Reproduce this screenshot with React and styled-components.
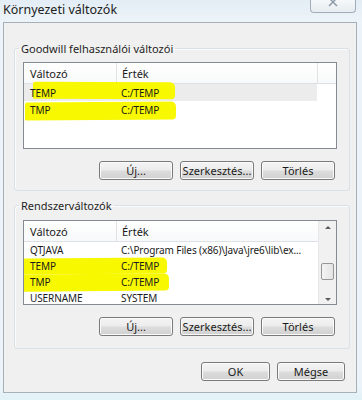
import styled, { createGlobalStyle } from "styled-components";

const GlobalStyle = createGlobalStyle`
  body {
    margin: 0;
    background: #e4f1f7;
    font-family: "Noto Sans", "Open Sans", sans-serif;
    color: #1a1a1a;
  }
`;

const Window = styled.div`
  width: 362px;
  height: 400px;
  display: flex;
  flex-direction: column;
  background: linear-gradient(180deg, #e3edf5 0px, #edf4f9 22px, #edf4f9 380px, #e2f2f7 400px);
  overflow: hidden;
`;

const TitleBar = styled.div`
  height: 22px;
  display: flex;
  justify-content: space-between;
  align-items: flex-start;
`;

const Title = styled.span`
  font-size: 12.5px;
  line-height: 16px;
  padding: 2px 0 0 3px;
  color: #222;
`;

const CloseButton = styled.div`
  width: 44px;
  height: 12px;
  margin-right: 6px;
  border: 1px solid #a3adb7;
  border-top: none;
  border-radius: 0 0 4px 4px;
  background: linear-gradient(180deg, #f5f8fa, #e6ecf1);
  display: flex;
  justify-content: center;
  align-items: flex-start;
`;

const Panel = styled.div`
  margin: 0 5px 0 3px;
  height: 371px;
  box-sizing: border-box;
  border: 1px solid #a7b0b8;
  background: #f0f0f0;
  padding: 19px 6px 0 10px;
  display: flex;
  flex-direction: column;
`;

const Group = styled.fieldset`
  margin: ${(p) => p.$mt || 0}px 0 0 0;
  border: 1px solid #d9e1e6;
  border-radius: 3px;
  padding: 0 12px ${(p) => p.$pb}px 8px;
  min-width: 0;
  box-shadow: inset 1px 1px 0 #fbfbfb;
`;

const Legend = styled.legend`
  font-size: 11px;
  line-height: 13px;
  padding: 0 2px;
  margin-left: -4px;
  color: #1e1e1e;
`;

const ListBox = styled.div`
  margin-top: ${(p) => p.$mt}px;
  height: ${(p) => p.$h}px;
  box-sizing: border-box;
  border: 1px solid #868b93;
  background: #fff;
  overflow: hidden;
  display: flex;
`;

const Table = styled.div`
  flex: 1;
  min-width: 0;
`;

const Header = styled.div`
  display: grid;
  grid-template-columns: 93px 201px 1fr;
  height: 21px;
  box-sizing: border-box;
  border-bottom: 1px solid #dde1e6;
  background: linear-gradient(180deg, #ffffff, #f8f9fa);
  font-size: 11px;
`;

const HeadCell = styled.div`
  display: flex;
  align-items: center;
  padding-left: ${(p) => p.$pl}px;
  border-right: ${(p) => (p.$last ? "none" : "1px solid #e2e2e2")};
`;

const Row = styled.div`
  position: relative;
  display: grid;
  grid-template-columns: 93px 1fr;
  height: ${(p) => p.$h}px;
  align-items: center;
  font-size: 10px;
  letter-spacing: -0.1px;
  background: ${(p) => (p.$selected ? "#ececec" : "transparent")};
  margin-right: ${(p) => (p.$selected ? 19 : 0)}px;
`;

const Cell = styled.span`
  position: relative;
  padding-left: ${(p) => p.$pl}px;
  white-space: nowrap;
  overflow: hidden;
`;

const Marker = styled.span`
  position: absolute;
  left: ${(p) => p.$l}px;
  top: ${(p) => p.$t}px;
  width: ${(p) => p.$w}px;
  height: ${(p) => p.$hh}px;
  background: #f8f800;
  border-radius: 2px 5px 4px 1px;
  transform: rotate(${(p) => p.$r || 0}deg);
`;

const ScrollBar = styled.div`
  width: 17px;
  background: #f1f1f1;
  border-left: 1px solid #e8e8e8;
  display: flex;
  flex-direction: column;
  align-items: center;
`;

const Arrow = styled.div`
  width: 0;
  height: 0;
  border-left: 3px solid transparent;
  border-right: 3px solid transparent;
  ${(p) =>
    p.$down
      ? "border-top: 3px solid #5c5c5c; margin-top: 18px;"
      : "border-bottom: 3px solid #5c5c5c; margin-top: 5px;"}
`;

const Thumb = styled.div`
  width: 13px;
  height: 17px;
  margin-top: 34px;
  box-sizing: border-box;
  border: 1px solid #979797;
  border-radius: 2px;
  background: linear-gradient(90deg, #f4f4f4, #e4e4e4);
`;

const ButtonRow = styled.div`
  display: flex;
  justify-content: flex-end;
  gap: 7px;
  margin-top: ${(p) => p.$mt}px;
  padding-right: ${(p) => p.$pr}px;
`;

const Button = styled.button`
  width: ${(p) => p.$w}px;
  height: 19px;
  padding: 0;
  border: 1px solid #7a7a7a;
  border-radius: 3px;
  background: linear-gradient(180deg, #f4f4f4 0%, #ececec 48%, #dddddd 52%, #d0d0d0 100%);
  box-shadow: inset 0 0 0 1px #fbfbfb;
  font-family: "Noto Sans", "Open Sans", sans-serif;
  font-size: 11px;
  color: #1a1a1a;
`;

const userVars = [
  { name: "TEMP", value: "C:/TEMP", selected: true, mark: { l: 9, t: -2, w: 142, hh: 17, r: 0.3 } },
  { name: "TMP", value: "C:/TEMP", mark: { l: 1, t: 1, w: 151, hh: 18, r: -0.4 } },
];

const sysVars = [
  { name: "QTJAVA", value: "C:\\Program Files (x86)\\Java\\jre6\\lib\\ex..." },
  { name: "TEMP", value: "C:/TEMP", mark: { l: -2, t: 0, w: 145, hh: 16, r: -0.5 } },
  { name: "TMP", value: "C:/TEMP", mark: { l: -1, t: 0, w: 146, hh: 17, r: -0.5 } },
  { name: "USERNAME", value: "SYSTEM" },
];

const VarList = ({ rows, rowH, height, mt, scroll }) => (
  <ListBox $h={height} $mt={mt}>
    <Table>
      <Header>
        <HeadCell $pl={6}>Változó</HeadCell>
        <HeadCell $pl={5} $last={scroll}>Érték</HeadCell>
        <HeadCell $last />
      </Header>
      {rows.map((r, i) => (
        <Row key={i} $h={rowH} $selected={r.selected}>
          {r.mark && (
            <Marker $l={r.mark.l} $t={r.mark.t} $w={r.mark.w} $hh={r.mark.hh} $r={r.mark.r} />
          )}
          <Cell $pl={6}>{r.name}</Cell>
          <Cell $pl={4}>{r.value}</Cell>
        </Row>
      ))}
    </Table>
    {scroll && (
      <ScrollBar>
        <Arrow />
        <Thumb />
        <Arrow $down />
      </ScrollBar>
    )}
  </ListBox>
);

const ActionButtons = ({ mt }) => (
  <ButtonRow $mt={mt} $pr={2}>
    <Button $w={74}>Új...</Button>
    <Button $w={74}>Szerkesztés...</Button>
    <Button $w={74}>Törlés</Button>
  </ButtonRow>
);

export default function App() {
  return (
    <Window>
      <GlobalStyle />
      <TitleBar>
        <Title>Környezeti változók</Title>
        <CloseButton>
          <svg width="12" height="8" viewBox="0 0 12 8">
            <path d="M2 -2 L10 6 M10 -2 L2 6" stroke="#8a96a3" strokeWidth="1.4" fill="none" />
          </svg>
        </CloseButton>
      </TitleBar>
      <Panel>
        <Group $pb={10}>
          <Legend>Goodwill felhasználói változói</Legend>
          <VarList rows={userVars} rowH={17} height={87} mt={7} />
          <ActionButtons mt={12} />
        </Group>
        <Group $mt={8} $pb={12}>
          <Legend>Rendszerváltozók</Legend>
          <VarList rows={sysVars} rowH={16} height={85} mt={8} scroll />
          <ActionButtons mt={12} />
        </Group>
        <ButtonRow $mt={13} $pr={5}>
          <Button $w={69}>OK</Button>
          <Button $w={68}>Mégse</Button>
        </ButtonRow>
      </Panel>
    </Window>
  );
}
